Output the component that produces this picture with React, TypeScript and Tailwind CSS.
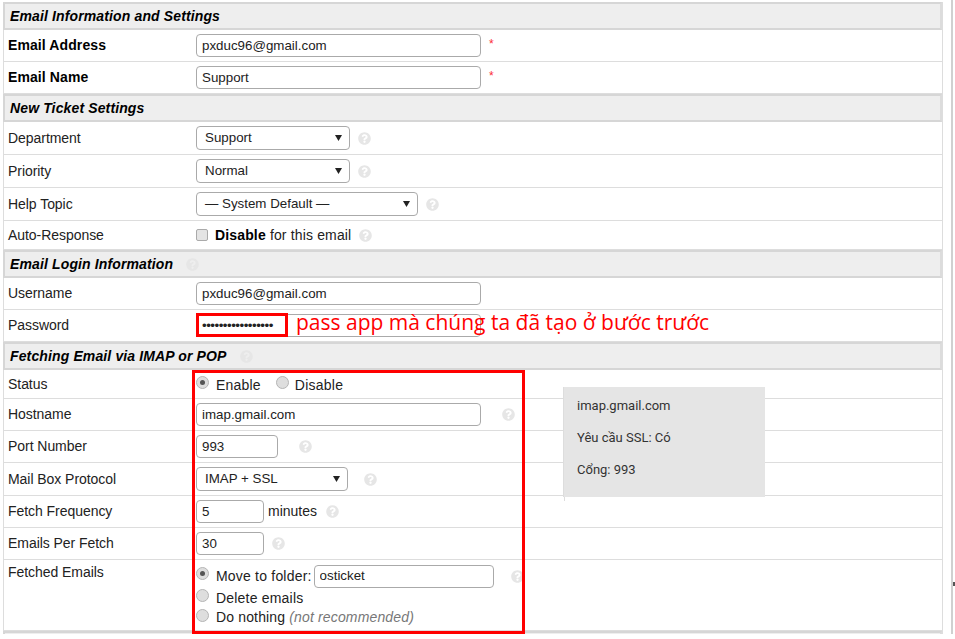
import React from "react";
import { FaQuestionCircle } from "react-icons/fa";

const Help = ({ className = "" }: { className?: string }) => (
  <FaQuestionCircle className={`text-[13px] text-[#e6e6e6] shrink-0 ${className}`} />
);

const Header = ({ title, h, help }: { title: string; h: string; help?: string }) => (
  <div className={`flex items-center border-2 border-[#d6d6d6] border-r-[#dcdcdc] bg-[#eeeeee] pl-[1px] font-bold italic text-[14px] text-black tracking-[0.13px] -ml-[1px] ${h}`}>
    <span className="pl-[4px]">{title}</span>
    {help && <Help className={help} />}
  </div>
);

const Row = ({ label, bold, h, top, children }: { label: string; bold?: boolean; h: string; top?: boolean; children: React.ReactNode }) => (
  <div className={`flex border-b border-[#dddddd] ${top ? "items-start" : "items-center"} ${h}`}>
    <div className={`w-[192px] pl-[4px] shrink-0 ${bold ? "font-bold tracking-[0.1px] text-black" : "tracking-[-0.05px]"} ${top ? "pt-[2px]" : ""}`}>{label}</div>
    {children}
  </div>
);

const Field = ({ value, w, className = "" }: { value: string; w: string; className?: string }) => (
  <input
    readOnly
    value={value}
    className={`h-[23px] rounded-[4px] border border-[#aaaaaa] bg-white px-[5px] pb-[1px] text-[13.33px] text-[#222222] outline-none ${w} ${className}`}
  />
);

const Select = ({ value, w }: { value: string; w: string }) => (
  <div className={`flex h-[24px] items-center justify-between rounded-[4px] border border-[#aaaaaa] bg-white pb-[1px] pl-[8px] pr-[7px] text-[13.33px] text-[#222222] ${w}`}>
    <span>{value}</span>
    <svg width="7" height="7" viewBox="0 0 7 7"><path d="M0 1h7L3.5 7z" fill="#222222" /></svg>
  </div>
);

const Radio = ({ on, className = "" }: { on?: boolean; className?: string }) => (
  <span className={`flex h-[13px] w-[13px] shrink-0 items-center justify-center rounded-full border border-[#b5b5b5] bg-[#dedede] ${className}`}>
    {on && <span className="h-[5px] w-[5px] rounded-full bg-[#555555]" />}
  </span>
);

export default function App() {
  return (
    <div className="relative h-[634px] w-[955px] overflow-hidden bg-white font-['Liberation_Sans',Arial,sans-serif] text-[14px] text-[#222222]">
      <div className="flex h-full">
        <div className="ml-[3px] mt-[2px] w-[940px] shrink-0 border-x border-[#dddddd]">
          <Header title="Email Information and Settings" h="h-[28px]" />
          <Row label="Email Address" bold h="h-[32px]">
            <Field value="pxduc96@gmail.com" w="w-[285px]" />
            <span className="ml-[8px] -mt-[3px] text-[12px] text-red-500">*</span>
          </Row>
          <Row label="Email Name" bold h="h-[32px]">
            <Field value="Support" w="w-[285px]" />
            <span className="ml-[8px] -mt-[3px] text-[12px] text-red-500">*</span>
          </Row>
          <Header title="New Ticket Settings" h="h-[28px]" />
          <Row label="Department" h="h-[33px]">
            <Select value="Support" w="w-[154px]" />
            <Help className="ml-[8px]" />
          </Row>
          <Row label="Priority" h="h-[33px]">
            <Select value="Normal" w="w-[154px]" />
            <Help className="ml-[8px]" />
          </Row>
          <Row label="Help Topic" h="h-[33px]">
            <Select value="— System Default —" w="w-[222px]" />
            <Help className="ml-[8px]" />
          </Row>
          <Row label="Auto-Response" h="h-[29px]">
            <span className="h-[12px] w-[12px] rounded-[2px] border border-[#aaaaaa] bg-[#e4e4e4]" />
            <span className="ml-[7px] tracking-[0.15px]"><b className="font-bold text-black">Disable</b> for this email</span>
            <Help className="ml-[8px]" />
          </Row>
          <Header title="Email Login Information" h="h-[28px]" help="ml-[13px]" />
          <Row label="Username" h="h-[32px]">
            <Field value="pxduc96@gmail.com" w="w-[285px]" />
          </Row>
          <Row label="Password" h="h-[32px]">
            <Field value="•••••••••••••••••" w="w-[285px]" className="text-[10px] tracking-[-0.5px]" />
          </Row>
          <Header title="Fetching Email via IMAP or POP" h="h-[28px]" help="ml-[13px]" />
          <Row label="Status" h="h-[29px]">
            <Radio on className="mb-[3px]" />
            <span className="ml-[7px] mt-[2px] tracking-[0.2px]">Enable</span>
            <Radio className="mb-[3px] ml-[15px]" />
            <span className="ml-[6px] mt-[2px] tracking-[0.25px]">Disable</span>
          </Row>
          <Row label="Hostname" h="h-[32px]">
            <Field value="imap.gmail.com" w="w-[285px]" />
            <Help className="ml-[21px]" />
          </Row>
          <Row label="Port Number" h="h-[32px]">
            <Field value="993" w="w-[82px]" />
            <Help className="ml-[21px]" />
          </Row>
          <Row label="Mail Box Protocol" h="h-[33px]">
            <Select value="IMAP + SSL" w="w-[152px]" />
            <Help className="ml-[16px]" />
          </Row>
          <Row label="Fetch Frequency" h="h-[32px]">
            <Field value="5" w="w-[68px]" />
            <span className="ml-[4px]">minutes</span>
            <Help className="ml-[9px]" />
          </Row>
          <Row label="Emails Per Fetch" h="h-[32px]">
            <Field value="30" w="w-[68px]" />
            <Help className="ml-[8px]" />
          </Row>
          <Row label="Fetched Emails" h="h-[71px]" top>
            <div className="flex flex-col pt-[4px] tracking-[0.2px]">
              <div className="flex h-[24px] items-center">
                <Radio on className="mb-[5px]" />
                <span className="ml-[7px]">Move to folder:</span>
                <Field value="osticket" w="w-[180px]" className="ml-[2px] tracking-normal" />
                <Help className="ml-[17px]" />
              </div>
              <div className="flex h-[20px] items-center">
                <Radio className="mb-[5px]" />
                <span className="ml-[7px]">Delete emails</span>
              </div>
              <div className="flex h-[19px] items-center">
                <Radio className="mb-[5px]" />
                <span className="ml-[7px] tracking-[0.15px]">Do nothing <i className="text-[#777777]">(not recommended)</i></span>
              </div>
            </div>
          </Row>
          <Header title="" h="h-[28px]" />
        </div>
        <div className="ml-[8px] w-[2px] shrink-0 bg-[#d0d0d0]" />
      </div>

      {/* annotations drawn over the form */}
      <div className="absolute left-[196px] top-[313px] h-[24px] w-[92px] border-[3px] border-[#ff0000]" />
      <div className="absolute left-[296px] top-[308px] font-['Open_Sans',sans-serif] text-[21px] leading-[28px] text-[#ff0000]">
        pass app mà chúng ta đã tạo ở bước trước
      </div>
      <div className="absolute left-[192px] top-[370px] h-[264px] w-[333px] border-[3px] border-[#ff0000]" />
      <div className="absolute left-[564px] top-[387px] h-[114px] w-[1px] bg-[#dddddd]" />
      <div className="absolute left-[563px] top-[387px] flex h-[110px] w-[202px] flex-col gap-[16px] border-l border-[#dddddd] bg-[#e5e5e5] pl-[13px] pt-[11px] font-['Roboto',sans-serif] text-[13px] leading-[16px] text-[#333333]">
        <span>imap.gmail.com</span>
        <span>Yêu cầu SSL: Có</span>
        <span>Cổng: 993</span>
      </div>
      <div className="absolute left-[953px] top-[582px] h-[4px] w-[2px] border border-[#555555]" />
    </div>
  );
}
